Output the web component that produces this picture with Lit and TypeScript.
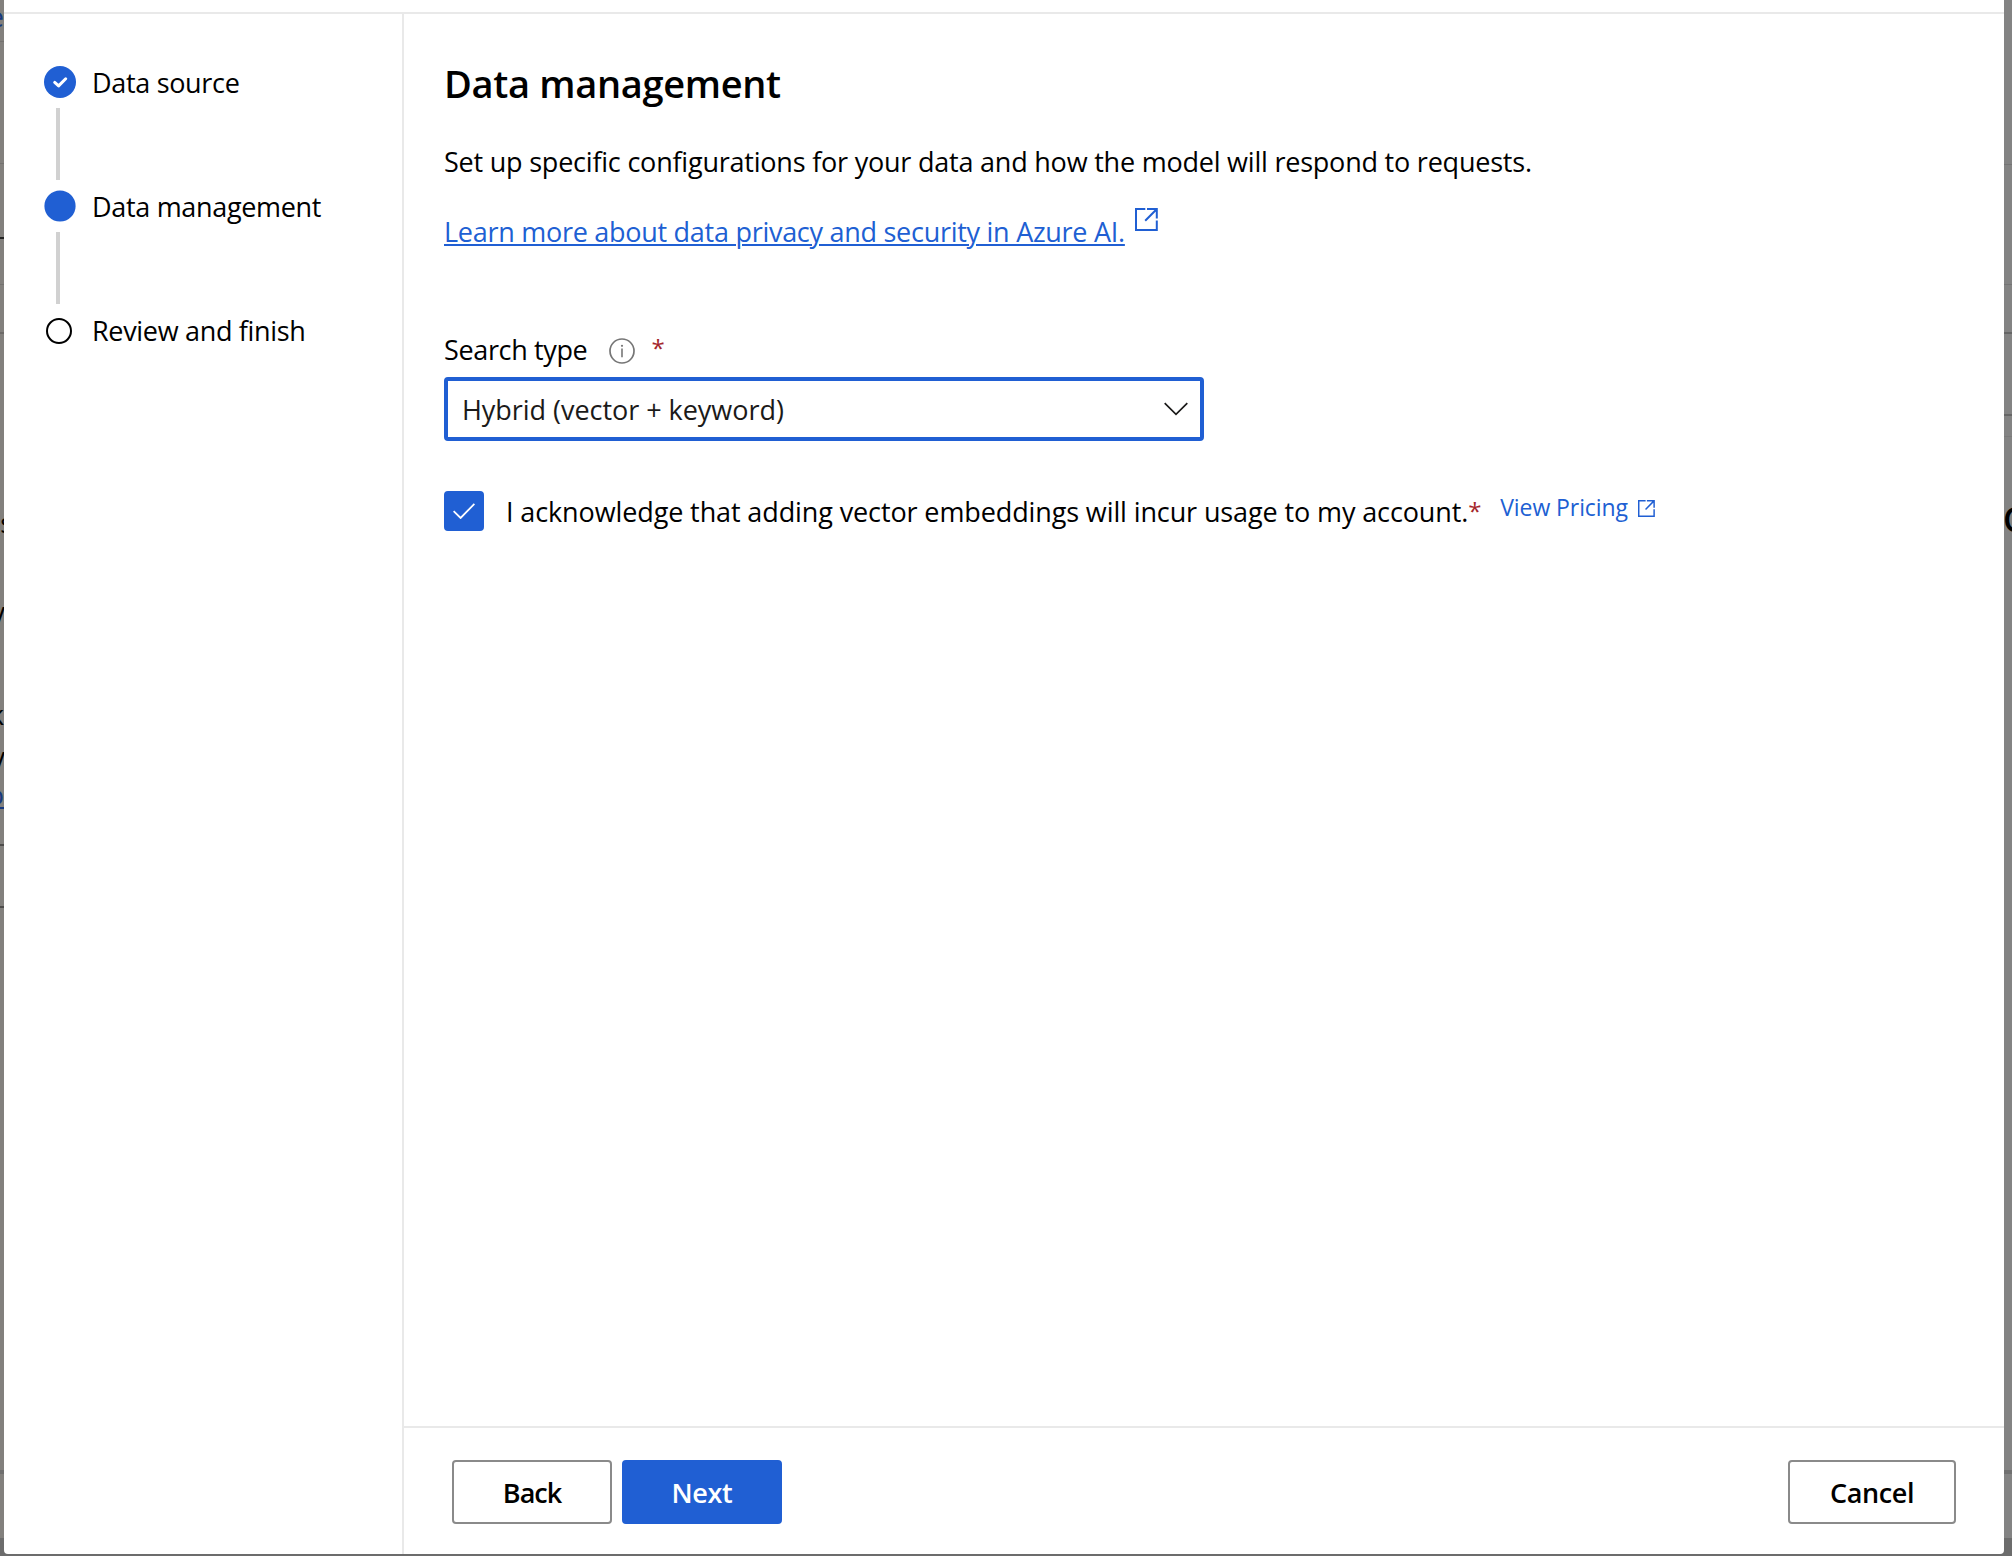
import { LitElement, html, css, svg } from "lit";
import { customElement, state } from "lit/decorators.js";
import { classMap } from "lit/directives/class-map.js";

type StepState = "done" | "current" | "todo";

const STEPS: { label: string; state: StepState }[] = [
  { label: "Data source", state: "done" },
  { label: "Data management", state: "current" },
  { label: "Review and finish", state: "todo" },
];

const stepIcon = (s: StepState) => html`<svg class="dot" viewBox="0 0 32 32" aria-hidden="true">
  ${s === "done"
    ? svg`<circle cx="16" cy="16" r="16" fill="#205fd3"/><path d="M10.7 16.4l3.9 3.5 7.1-7.1" fill="none" stroke="#fff" stroke-width="3" stroke-linecap="round" stroke-linejoin="round"/>`
    : s === "current"
      ? svg`<circle cx="16" cy="16" r="15.6" fill="#205fd3"/>`
      : svg`<circle cx="15" cy="17" r="12" fill="#fff" stroke="#000" stroke-width="2"/>`}
</svg>`;

@customElement("wizard-steps")
class WizardSteps extends LitElement {
  static styles = css`
    :host { display: flex; flex-direction: column; }
    .step { display: flex; height: 124px; }
    .rail { display: flex; flex-direction: column; width: 32px; }
    .dot { display: block; width: 32px; height: 32px; }
    .line { width: 4px; height: 72px; margin: 10px 0 0 12px; background: #d1d1d1; }
    .label { margin-left: 16px; line-height: 40px; margin-top: -3px; white-space: nowrap; letter-spacing: -0.32px; }
  `;
  render() {
    return STEPS.map((s, i) => html`<div class="step">
      <div class="rail">${stepIcon(s.state)}${i < STEPS.length - 1 ? html`<div class="line"></div>` : ""}</div>
      <div class="label">${s.label}</div>
    </div>`);
  }
}

@customElement("app-root")
class AppRoot extends LitElement {
  @state() private acknowledged = true;

  static styles = css`
    :host {
      display: block; position: relative; width: 2012px; height: 1556px; overflow: hidden;
      box-sizing: border-box; padding: 0 8px 2px 4px; background: #6c6c6c;
      font-family: "Open Sans", "Noto Sans", sans-serif; font-size: 27px; color: #000;
    }
    .edge { position: absolute; top: 0; height: 1538px; overflow: hidden; }
    .edge.left { left: 0; width: 4px; background: #82807d; }
    .edge.right { right: 0; width: 8px; background: #838383; }
    .mark { position: absolute; left: 0; width: 100%; }
    .glyph { position: absolute; line-height: 40px; white-space: nowrap; }
    .link { color: #16397f; }
    .big { font-size: 34px; font-weight: 600; }
    .panel {
      position: relative; display: flex; flex-direction: column; height: 1554px;
      background: #fff; border-radius: 0 0 4px 4px; overflow: hidden;
    }
    .top { height: 12px; border-bottom: 2px solid #e9e9e9; }
    .body { display: flex; flex: 1; min-height: 0; }
    .nav { width: 398px; border-right: 2px solid #e9e9e9; }
    .nav wizard-steps { padding: 52px 0 0 40px; }
    .main { display: flex; flex-direction: column; flex: 1; }
    .content { flex: 1; padding: 41px 40px 0; }
    h1 { margin: 0; font-size: 38px; font-weight: 600; line-height: 56px; letter-spacing: -0.32px; }
    .desc { margin: 31px 0 0; line-height: 40px; letter-spacing: -0.216px; }
    .more { display: flex; margin-top: 30px; line-height: 40px; }
    a { color: #205fd3; text-decoration: none; }
    .more a {
      letter-spacing: -0.275px; text-decoration: underline; text-decoration-thickness: 2px;
      text-underline-offset: 2px;
    }
    .ext { display: block; margin: -4.5px 0 0 10.5px; width: 23px; height: 23px; }
    .labelrow { display: flex; margin-top: 78px; line-height: 40px; letter-spacing: -0.36px; }
    .info { display: block; width: 26px; height: 26px; margin: 8px 0 0 21.7px; }
    .req { color: #a4262c; letter-spacing: 0; font-size: 24px; }
    .labelrow .req { margin: -2px 0 2px 16.5px; }
    .select {
      display: flex; align-items: center; justify-content: space-between; box-sizing: border-box;
      width: 760px; height: 64px; margin-top: 7px; padding: 0 12px 0 14px;
      border: 4px solid #205fd3; border-radius: 4px; color: #1b1a19;
    }
    .value { padding-top: 1px; letter-spacing: -0.04px; }
    .chev { width: 24px; height: 14px; }
    .ack { display: flex; margin-top: 50px; }
    .box {
      display: grid; place-items: center; width: 40px; height: 40px; border-radius: 4px;
      box-sizing: border-box; border: 2px solid #8a8886;
    }
    .box.on { background: #205fd3; border-color: #205fd3; }
    .acktext { margin: 1px 0 -1px 22px; line-height: 40px; letter-spacing: -0.115px; white-space: nowrap; }
    .ack .req { line-height: 40px; width: 12px; }
    .pricing { display: flex; margin-left: 20px; font-size: 23px; line-height: 32px; letter-spacing: -0.08px; }
    .pricing .ext { width: 17px; height: 17px; margin: 8.5px 0 0 10.5px; }
    .footer { display: flex; align-items: flex-start; height: 126px; border-top: 2px solid #e9e9e9; padding: 0 48px; box-sizing: content-box; }
    .btn {
      box-sizing: border-box; width: 160px; height: 64px; margin-top: 32px; border: 2px solid #8a8a8a;
      border-radius: 4px; background: #fff; font: 600 27px/60px "Open Sans", "Noto Sans", sans-serif;
      padding: 1px 0 0; color: #000; text-align: center;
    }
    .back { letter-spacing: -1px; }
    .next { margin-left: 10px; background: #205fd3; border-color: #205fd3; color: #fff; letter-spacing: -0.35px; }
    .cancel { width: 168px; margin-left: auto; letter-spacing: -0.4px; }
  `;

  private mark = (y: number, h: number, color: string) =>
    html`<div class="mark" style="top:${y}px;height:${h}px;background:${color}"></div>`;

  private ext = (w: number) => html`<svg class="ext" viewBox="0 0 23 23" aria-hidden="true">
    <g fill="none" stroke="#205fd3" stroke-width=${w}>
      <path d="M10.3 1H1v21h20.8V12.6"/><path d="M12 1h9.8v9.6M21.6 1.2L10.2 12.8"/>
    </g></svg>`;

  render() {
    return html`
      <div class="edge left">
        ${this.mark(41, 1, "#747270")}${this.mark(163, 1, "#747270")}${this.mark(237, 2, "#222")}
        ${this.mark(284, 1, "#747270")}${this.mark(332, 2, "#6c6a68")}${this.mark(844, 2, "#4d4c4b")}
        ${this.mark(906, 2, "#4d4c4b")}${this.mark(1470, 4, "#6f6f6f")}
        <span class="glyph link" style="right:0;top:-3px">e</span>
        <span class="glyph" style="right:-9px;top:503px">s</span>
        <span class="glyph" style="right:-1px;top:592px">y</span>
        <span class="glyph" style="right:0;top:695px">k</span>
        <span class="glyph" style="right:-1px;top:737px">y</span>
        <span class="glyph link" style="right:0;top:775px">o</span>
        ${this.mark(807, 2, "#16397f")}
      </div>
      <div class="edge right">
        ${this.mark(164, 1, "#747474")}${this.mark(284, 1, "#747474")}${this.mark(332, 2, "#666")}
        ${this.mark(414, 2, "#666")}${this.mark(436, 1, "#7a7a7a")}${this.mark(1470, 4, "#707070")}
        <span class="glyph big" style="left:-1px;top:499px">C</span>
      </div>
      <div class="panel">
        <div class="top"></div>
        <div class="body">
          <div class="nav"><wizard-steps></wizard-steps></div>
          <div class="main">
            <div class="content">
              <h1>Data management</h1>
              <p class="desc">Set up specific configurations for your data and how the model will respond to requests.</p>
              <div class="more"><a>Learn more about data privacy and security in Azure AI.</a>${this.ext(2)}</div>
              <div class="labelrow"><span>Search type</span>
                <svg class="info" viewBox="0 0 26 26" aria-hidden="true">
                  <circle cx="13" cy="13" r="12" fill="none" stroke="#767676" stroke-width="1.7"/>
                  <path d="M13 10.6v8.6" stroke="#767676" stroke-width="1.6"/><circle cx="13" cy="7.8" r="1.1" fill="#767676"/>
                </svg>
                <span class="req">*</span>
              </div>
              <div class="select"><span class="value">Hybrid (vector + keyword)</span>
                <svg class="chev" viewBox="0 0 24 14" aria-hidden="true"><path d="M.7 1.2L12 12.4 23.3 1.2" fill="none" stroke="#1b1a19" stroke-width="1.7"/></svg>
              </div>
              <div class="ack">
                <div class=${classMap({ box: true, on: this.acknowledged })} @click=${() => (this.acknowledged = !this.acknowledged)}>
                  <svg width="22" height="16" viewBox="0 0 22 16" aria-hidden="true"><path d="M.6 8.2L7.6 15 21.4.8" fill="none" stroke="#fff" stroke-width="1.8"/></svg>
                </div>
                <span class="acktext">I acknowledge that adding vector embeddings will incur usage to my account.</span><span class="req">*</span>
                <a class="pricing">View Pricing${this.ext(2)}</a>
              </div>
            </div>
            <div class="footer">
              <button class="btn back">Back</button>
              <button class="btn next">Next</button>
              <button class="btn cancel">Cancel</button>
            </div>
          </div>
        </div>
      </div>`;
  }
}
